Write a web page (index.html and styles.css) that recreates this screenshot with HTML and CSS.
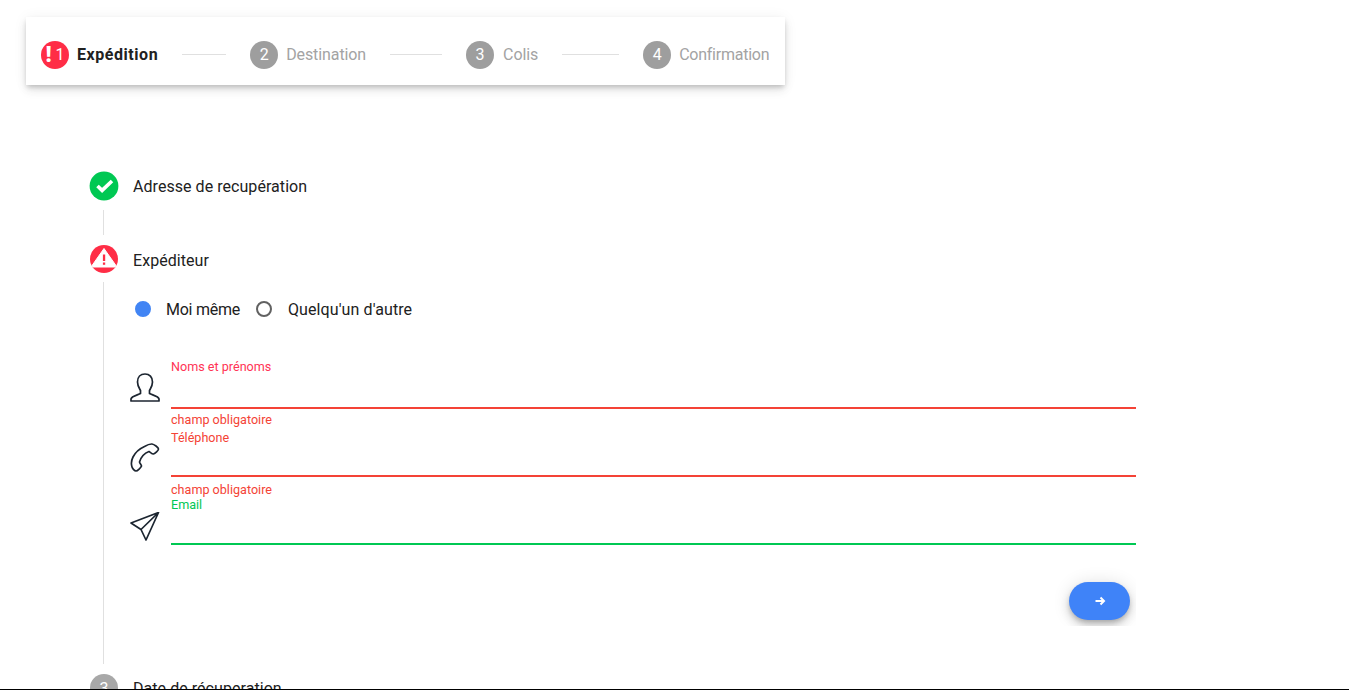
FILE: index.html
```html
<!DOCTYPE html>
<html lang="fr">
<head>
<meta charset="utf-8">
<title>Expédition</title>
<link rel="stylesheet" href="styles.css">
</head>
<body>
<div class="page">
  <nav class="stepper">
    <div class="st active"><span class="st-dot st-error"><b class="bang">!</b><span>1</span></span><span class="st-label">Expédition</span></div>
    <span class="st-line w1"></span>
    <div class="st"><span class="st-dot">2</span><span class="st-label">Destination</span></div>
    <span class="st-line w2"></span>
    <div class="st st-wide"><span class="st-dot">3</span><span class="st-label">Colis</span></div>
    <span class="st-line w3"></span>
    <div class="st"><span class="st-dot">4</span><span class="st-label tight">Confirmation</span></div>
  </nav>

  <section class="timeline">
    <div class="step">
      <svg class="step-ico" viewBox="0 0 28 28"><circle cx="14" cy="14" r="14.4" fill="#00c853"/><path d="M7.500 14l4.600 4.400L22 9" fill="none" stroke="#fff" stroke-width="3.600"/></svg>
      <span class="step-title">Adresse de recupération</span>
    </div>
    <div class="rail rail-short"></div>
    <div class="step">
      <svg class="step-ico" viewBox="0 0 28 28"><defs><clipPath id="disc"><circle cx="14" cy="14" r="14"/></clipPath></defs><circle cx="14" cy="14" r="14" fill="#ff2d46"/><path d="M14 3.500L27 22H1Z" fill="#fff" stroke="#fff" stroke-linejoin="round" clip-path="url(#disc)"/><rect x="12.900" y="9.500" width="2.300" height="6.500" fill="#ff2d46"/><rect x="12.900" y="17.500" width="2.300" height="2.300" fill="#ff2d46"/></svg>
      <span class="step-title title-low">Expéditeur</span>
    </div>
    <div class="rail rail-long">
      <div class="radios">
        <span class="radio radio-on"></span><span class="radio-label first">Moi même</span>
        <span class="radio"></span><span class="radio-label second">Quelqu'un d'autre</span>
      </div>

      <div class="field field-name">
        <svg class="field-ico" viewBox="0 0 30 30"><path d="M15 1C10.500 1 7.500 4 7.500 9C7.500 13 9.500 15.500 10.500 17.500V20.500C8 22 1.500 23 1 26V28H29V26C28.500 23 22 22 19.500 20.500V17.500C20.500 15.500 22.500 13 22.500 9C22.500 4 19.500 1 15 1Z"/></svg>
        <div class="field-body err">
          <label class="field-label pink">Noms et prénoms</label>
          <div class="field-input"></div>
          <div class="field-msg">champ obligatoire</div>
        </div>
      </div>

      <div class="field field-phone">
        <svg class="field-ico" viewBox="0 0 30 30"><path d="M14.500 3.500C17 2 19.500 .8 22 1C24 1.200 28.500 4.500 28.500 6C28.500 7.500 25 10.500 23.500 11C22 11 20 9 19 8.500C15 10 11 14 9.500 19C9.500 20 11.500 22 11.500 23C11 24.500 7.500 28 6 28C4.500 28 2.500 25.500 2 24C1 21 1.500 17 3 14C5 10 9 6 14.500 3.500Z"/></svg>
        <div class="field-body err">
          <label class="field-label">Téléphone</label>
          <div class="field-input"></div>
          <div class="field-msg">champ obligatoire</div>
        </div>
      </div>

      <div class="field field-mail">
        <svg class="field-ico" viewBox="0 0 30 30"><path d="M28.500 .5L1 11L11 17.500L16 28ZM28.500 .5L11 17.500"/></svg>
        <div class="field-body ok">
          <label class="field-label">Email</label>
          <div class="field-input"></div>
        </div>
      </div>

      <div class="actions">
        <button class="next" type="button" aria-label="Suivant"><svg viewBox="0 0 12 12"><path d="M1.500 6H10M6.500 2.500L10 6L6.500 9.500"/></svg></button>
      </div>
    </div>
    <div class="step">
      <span class="step-num">3</span>
      <span class="step-title">Date de récuperation</span>
    </div>
  </section>
</div>
</body>
</html>
```
FILE: styles.css
```css
* { box-sizing: border-box; }
html, body { margin: 0; padding: 0; background: #fff; }
body { font-family: Roboto, "Liberation Sans", sans-serif; color: #212121; }
.page { height: 690px; overflow: hidden; border-bottom: 1px solid #000; padding-top: 17px; }

.stepper {
  display: flex; align-items: center;
  width: 759px; height: 68px; margin-left: 26px;
  padding: 8px 16px 0 15px;
  background: #fff;
  box-shadow: 0 3px 5px -1px rgba(0,0,0,.2), 0 6px 10px 0 rgba(0,0,0,.07), 0 1px 14px 0 rgba(0,0,0,.06);
}
.st { display: flex; align-items: center; gap: 8px; flex: none; font-size: 16px; color: #a3a3a3; }
.st-wide { gap: 9px; }
.st.active { color: #212121; font-weight: 700; }
.st-label { padding-bottom: 2px; letter-spacing: -.1px; }
.st-label.tight { letter-spacing: -.25px; }
.active .st-label { letter-spacing: .55px; }
.st-dot {
  width: 28px; height: 28px; border-radius: 50%;
  background: #9e9e9e; color: #fff; font-weight: 400;
  display: flex; align-items: center; justify-content: center; gap: 4px;
  padding-bottom: 1px;
}
.st-error { background: #ff2d46; }
.bang { font-size: 22px; font-weight: 900; line-height: 1; }
.st-line { flex: none; height: 1px; background: #e0e0e0; margin: 0 24px 2px; }
.w1 { width: 44px; }
.w2 { width: 52px; }
.w3 { width: 57px; }

.timeline { margin: 87px 0 0 90px; }
.step { display: flex; align-items: center; gap: 15px; height: 28px; }
.step-ico { width: 28px; height: 28px; flex: none; display: block; overflow: visible; }
.step-title { font-size: 16px; letter-spacing: .05px; }
.title-low { padding-top: 2px; }
.step-num {
  width: 28px; height: 28px; border-radius: 50%; flex: none;
  background: #a8a8a8; color: #fff; font-size: 16px;
  display: flex; align-items: center; justify-content: center;
}
.rail { margin-left: 13px; border-left: 1px solid #e0e0e0; }
.rail-short { height: 25px; margin-top: 10px; margin-bottom: 10px; }
.rail-long { height: 382px; margin-top: 9px; margin-bottom: 10px; padding-left: 26px; padding-top: 17px; width: 1033px; }

.radios { display: flex; align-items: center; height: 20px; padding-left: 5px; font-size: 16px; }
.radio { width: 16px; height: 16px; border-radius: 50%; border: 2px solid #616161; flex: none; }
.radio-on { background: #4285f4; border-color: #4285f4; }
.radio-label { margin-left: 15px; }
.radio-label.first { margin-right: 16px; letter-spacing: -.25px; }
.radio-label.second { margin-left: 16px; letter-spacing: .1px; }

.field { display: flex; }
.field-ico { width: 30px; height: 30px; flex: none; fill: none; stroke: #1c2530; stroke-width: 1.7; stroke-linejoin: round; display: block; margin-right: 11px; }
.field-body { flex: 1; font-size: 12.6px; line-height: 14px; }
.field-input { height: 2px; }
.field-label, .field-msg { display: block; }
.err { color: #f44336; }
.err .field-input { background: #f44336; }
.ok { color: #00c853; }
.ok .field-input { background: #00c853; }
.pink { color: #ff3355; }

.field-name { margin-top: 41px; }
.field-name .field-ico { margin-top: 13px; }
.field-name .field-input { margin-top: 33px; }
.field-name .field-msg { margin-top: 4px; }
.field-phone { margin-top: 4px; }
.field-phone .field-ico { margin-top: 12px; }
.field-phone .field-input { margin-top: 30px; }
.field-phone .field-msg { margin-top: 6px; }
.field-mail { margin-top: 1px; }
.field-mail .field-ico { margin-top: 14px; }
.field-mail .field-input { margin-top: 31px; }

.actions { display: flex; justify-content: flex-end; height: 67px; margin-top: 14px; padding: 23px 6px 0 0; overflow: hidden; }
.next {
  width: 61px; height: 38px; border: 0; border-radius: 19px; padding: 0;
  background: #3f83f8;
  display: flex; align-items: center; justify-content: center;
  box-shadow: 0 3px 5px -1px rgba(0,0,0,.2), 0 6px 10px 0 rgba(0,0,0,.14), 0 1px 18px 0 rgba(0,0,0,.12);
}
.next svg { width: 12px; height: 12px; fill: none; stroke: #fff; stroke-width: 2; }
```
